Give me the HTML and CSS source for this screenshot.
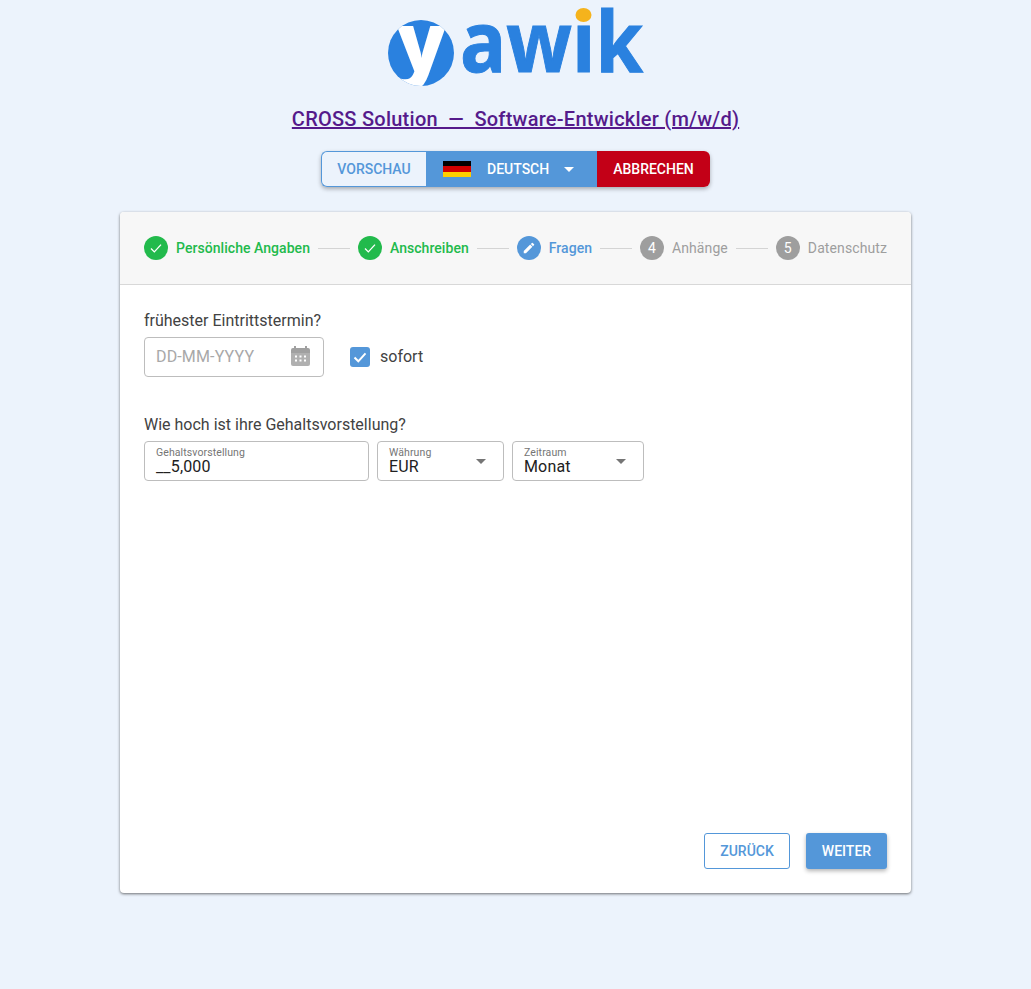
FILE: index.html
```html
<!DOCTYPE html>
<html lang="de">
<head>
    <meta charset="UTF-8">
    <meta name="viewport" content="width=device-width, initial-scale=1.0">
    <title>Bewerbung - Yawik</title>
    <link rel="stylesheet" href="styles.css">
</head>
<body>
    <header class="top">
        <svg class="logo" width="270" height="95" viewBox="0 0 270 95">
            <defs>
                <clipPath id="logo-circle"><circle cx="35" cy="53" r="33"></circle></clipPath>
            </defs>
            <circle cx="35" cy="53" r="33" fill="#2a81df"></circle>
            <g clip-path="url(#logo-circle)">
                <text class="logo-y" x="11" y="72" fill="#fff" textLength="49" lengthAdjust="spacingAndGlyphs">y</text>
            </g>
            <text class="logo-text" x="74" y="72" fill="#2a81df" stroke="#2a81df" textLength="183" lengthAdjust="spacingAndGlyphs">awık</text>
            <ellipse cx="197.500" cy="15" rx="8" ry="7" fill="#f5b31c"></ellipse>
        </svg>

        <a class="job-title" href="#">CROSS Solution &nbsp;—&nbsp; Software-Entwickler (m/w/d)</a>

        <div class="actions">
            <button type="button" class="act act-preview">VORSCHAU</button>
            <button type="button" class="act act-lang">
                <span class="flag"></span>
                <span class="lang-name">DEUTSCH</span>
                <span class="caret caret-white"></span>
            </button>
            <button type="button" class="act act-cancel">ABBRECHEN</button>
        </div>
    </header>

    <main class="card">
        <div class="stepper">
            <div class="step step-done">
                <span class="step-icon">
                    <svg width="16" height="16" viewBox="0 0 24 24"><path d="M4.500 12.800l5 5L19.500 7" fill="none" stroke="#fff" stroke-width="2"></path></svg>
                </span>
                <span class="step-label">Persönliche Angaben</span>
            </div>
            <span class="step-line"></span>
            <div class="step step-done">
                <span class="step-icon">
                    <svg width="16" height="16" viewBox="0 0 24 24"><path d="M4.500 12.800l5 5L19.500 7" fill="none" stroke="#fff" stroke-width="2"></path></svg>
                </span>
                <span class="step-label">Anschreiben</span>
            </div>
            <span class="step-line"></span>
            <div class="step step-active">
                <span class="step-icon">
                    <svg width="14" height="14" viewBox="0 0 24 24"><path fill="#fff" d="M3 17.250V21h3.750L17.810 9.940l-3.750-3.750L3 17.250zM20.710 7.040a1 1 0 0 0 0-1.410l-2.340-2.340a1 1 0 0 0-1.410 0l-1.830 1.830 3.750 3.750 1.830-1.830z"></path></svg>
                </span>
                <span class="step-label">Fragen</span>
            </div>
            <span class="step-line"></span>
            <div class="step">
                <span class="step-icon">4</span>
                <span class="step-label">Anhänge</span>
            </div>
            <span class="step-line"></span>
            <div class="step">
                <span class="step-icon">5</span>
                <span class="step-label">Datenschutz</span>
            </div>
        </div>

        <form class="form">
            <div class="question">
                <p class="question-label">frühester Eintrittstermin?</p>
                <div class="row row-date">
                    <div class="field field-date">
                        <span class="placeholder">DD-MM-YYYY</span>
                        <svg class="calendar" width="19" height="20" viewBox="0 0 19 20">
                            <path fill="#a0a0a0" d="M3 0h2v2h9V0h2v2h1a2 2 0 0 1 2 2v3H0V4a2 2 0 0 1 2-2h1V0z"></path>
                            <path fill="#b0b0b0" d="M0 7h19v11a2 2 0 0 1-2 2H2a2 2 0 0 1-2-2V7z"></path>
                            <path fill="#fff" d="M4 9.500h2v2H4zM8.500 9.500h2v2h-2zM13 9.500h2v2h-2zM4 13.500h2v2H4zM8.500 13.500h2v2h-2zM13 13.500h2v2h-2z"></path>
                        </svg>
                    </div>
                    <label class="check">
                        <span class="check-box">
                            <svg width="20" height="20" viewBox="0 0 20 20"><path d="M4.500 10.500l3.800 3.800 7.200-8" fill="none" stroke="#fff" stroke-width="2"></path></svg>
                        </span>
                        <span class="check-text">sofort</span>
                    </label>
                </div>
            </div>

            <div class="question">
                <p class="question-label">Wie hoch ist ihre Gehaltsvorstellung?</p>
                <div class="row row-salary">
                    <div class="field field-filled field-amount">
                        <span class="field-caption">Gehaltsvorstellung</span>
                        <span class="field-value">__5,000</span>
                    </div>
                    <div class="field field-filled field-currency">
                        <span class="field-caption">Währung</span>
                        <span class="field-value">EUR</span>
                        <span class="caret caret-grey"></span>
                    </div>
                    <div class="field field-filled field-period">
                        <span class="field-caption">Zeitraum</span>
                        <span class="field-value">Monat</span>
                        <span class="caret caret-grey"></span>
                    </div>
                </div>
            </div>
        </form>

        <div class="nav-buttons">
            <button type="button" class="btn btn-back">ZURÜCK</button>
            <button type="button" class="btn btn-next">WEITER</button>
        </div>
    </main>
</body>
</html>
```

FILE: styles.css
```css
* {
    margin: 0;
    padding: 0;
    box-sizing: border-box;
}

body {
    font-family: Roboto, "Liberation Sans", sans-serif;
    background: #ecf3fc;
    min-height: 100vh;
    display: flex;
    flex-direction: column;
    align-items: center;
    color: #424242;
}

.top {
    display: flex;
    flex-direction: column;
    align-items: center;
}

.logo {
    display: block;
    margin-left: 11px;
    overflow: visible;
}

.logo-text {
    font-family: "Open Sans", sans-serif;
    font-weight: 700;
    font-size: 84px;
    stroke-width: 1px;
}

.logo-y {
    font-family: "Open Sans", sans-serif;
    font-weight: 800;
    font-size: 84px;
}

.job-title {
    display: block;
    margin-top: 11px;
    font-size: 20px;
    line-height: 26px;
    font-weight: 500;
    letter-spacing: 0.25px;
    color: #551a8b;
}

.actions {
    display: flex;
    margin-top: 19px;
    height: 36px;
    border-radius: 6px;
    box-shadow: 0 2px 4px rgba(0,0,0,0.3);
}

.act {
    font-family: inherit;
    font-size: 14px;
    font-weight: 500;
    border: none;
    height: 36px;
}

.act-preview {
    width: 105px;
    color: #5497d9;
    background: #ecf3fc;
    border: 1px solid #5497d9;
    border-right: none;
    border-radius: 6px 0 0 6px;
}

.act-lang {
    width: 171px;
    display: flex;
    align-items: center;
    padding-left: 17px;
    color: #fff;
    background: #5497d9;
}

.flag {
    width: 28px;
    height: 16px;
    background: linear-gradient(#000 33.300%, #d00000 33.300%, #d00000 66.600%, #ffce00 66.600%);
}

.lang-name {
    margin-left: 16px;
}

.act-lang .caret {
    margin-left: 15px;
}

.act-cancel {
    width: 113px;
    color: #fff;
    background: #c30017;
    border-radius: 0 6px 6px 0;
}

.caret {
    display: block;
    width: 0;
    height: 0;
    border-left: 5px solid transparent;
    border-right: 5px solid transparent;
}

.caret-white {
    border-top: 5px solid #fff;
}

.caret-grey {
    border-top: 5px solid #757575;
}

.card {
    width: 791px;
    height: 681px;
    margin-top: 25px;
    background: #fff;
    border-radius: 4px;
    box-shadow: 0 1px 3px rgba(0,0,0,0.55);
    display: flex;
    flex-direction: column;
}

.stepper {
    display: flex;
    align-items: center;
    height: 73px;
    padding: 0 24px;
    background: #f7f7f7;
    border-bottom: 1px solid #d8d8d8;
    border-radius: 4px 4px 0 0;
}

.step {
    display: flex;
    align-items: center;
    gap: 8px;
    font-size: 14px;
    letter-spacing: 0.1px;
    color: #9e9e9e;
}

.step-icon {
    width: 24px;
    height: 24px;
    border-radius: 50%;
    display: flex;
    align-items: center;
    justify-content: center;
    color: #fff;
    font-size: 14px;
    background: #9e9e9e;
}

.step-done {
    color: #22ba4c;
    font-weight: 500;
    letter-spacing: 0.05px;
}

.step-done .step-icon {
    background: #22ba4c;
}

.step-active {
    color: #5497d9;
    font-weight: 500;
    letter-spacing: 0.05px;
}

.step-active .step-icon {
    background: #5497d9;
}

.step-line {
    flex: 1;
    height: 1px;
    margin: 0 8px;
    background: #d4d4d4;
}

.form {
    flex: 1;
    padding: 25px 24px 0;
}

.question {
    margin-bottom: 37px;
}

.question-label {
    font-size: 16px;
    line-height: 22px;
    margin-bottom: 5px;
}

.row {
    display: flex;
    align-items: center;
}

.row-salary {
    gap: 8px;
}

.field {
    position: relative;
    height: 40px;
    border: 1px solid #bdbdbd;
    border-radius: 4px;
    background: #fff;
}

.field-date {
    width: 180px;
    display: flex;
    align-items: center;
    justify-content: space-between;
    padding: 0 13px 2px 11px;
}

.placeholder {
    font-size: 16px;
    letter-spacing: 0.15px;
    color: #a8a8a8;
}

.calendar {
    display: block;
}

.check {
    display: flex;
    align-items: center;
    gap: 10px;
    margin-left: 26px;
    font-size: 16px;
}

.check-text {
    margin-top: -2px;
}

.check-box {
    width: 20px;
    height: 20px;
    border-radius: 3px;
    background: #5497d9;
    display: block;
}

.check-box svg {
    display: block;
}

.field-filled {
    padding: 5px 11px 0;
}

.field-caption {
    display: block;
    font-size: 10.500px;
    line-height: 11px;
    letter-spacing: 0.1px;
    color: #757575;
}

.field-value {
    display: block;
    margin-top: -1px;
    font-size: 16px;
    line-height: 19px;
    letter-spacing: 0.15px;
    color: #212121;
}

.field-filled .caret {
    position: absolute;
    right: 17px;
    top: 17px;
}

.field-amount {
    width: 225px;
}

.field-currency {
    width: 127px;
}

.field-period {
    width: 132px;
}

.nav-buttons {
    display: flex;
    justify-content: flex-end;
    gap: 16px;
    padding: 0 24px 24px;
}

.btn {
    height: 36px;
    font-family: inherit;
    font-size: 14px;
    font-weight: 500;
    border-radius: 3px;
}

.btn-back {
    width: 86px;
    color: #5497d9;
    background: #fff;
    border: 1px solid #5497d9;
}

.btn-next {
    width: 81px;
    color: #fff;
    background: #5497d9;
    border: none;
    box-shadow: 0 2px 4px rgba(0,0,0,0.3);
}
```
